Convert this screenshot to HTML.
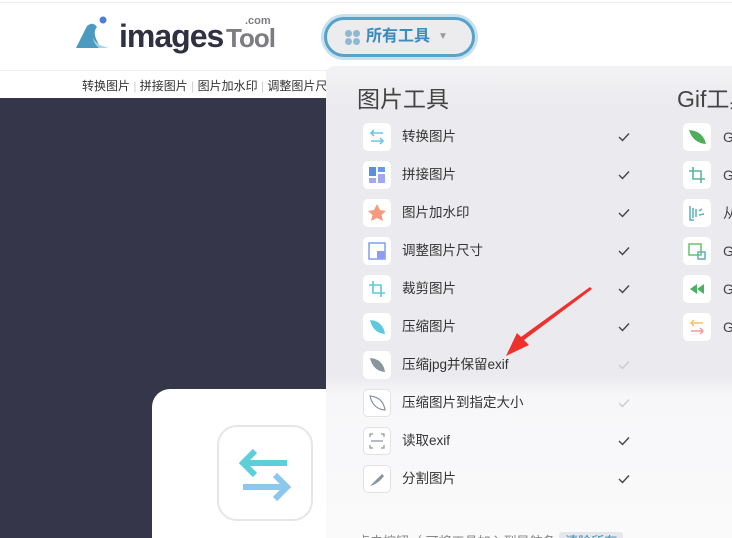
<!DOCTYPE html>
<html style="width:732px;height:538px;overflow:hidden"><head><meta charset="utf-8"><style>
*{margin:0;padding:0;box-sizing:border-box}
body{width:732px;height:538px;overflow:hidden;position:relative;background:#fff;font-family:"Liberation Sans","Noto Sans CJK SC",sans-serif;color:#333}
.abs{position:absolute}
.topline{top:0;left:0;width:732px;height:3px;border-bottom:1px solid #eee}
.nav{top:70px;left:0;width:732px;height:28px;border-top:1px solid #eee;font-size:12px;color:#333}
.dark{top:98px;left:0;width:732px;height:440px;background:#353649}
.card{left:152px;top:389px;width:300px;height:149px;background:#fff;border-radius:18px 18px 0 0}
.bigicon{left:217px;top:425px;width:96px;height:96px;border:2px solid #e6e6e6;border-radius:20px;background:#fff}
.panel{left:326px;top:66px;width:406px;height:472px;border-radius:8px 0 0 0;overflow:hidden;background:linear-gradient(#f3f3f6 0,#ebebef 40px,#ebebef 310px,#f7f7f9 330px,#fafafb 100%)}
.row{position:absolute;height:28px;font-size:13.5px;color:#333;line-height:28px}
.ib{position:absolute;width:28px;height:28px;background:#fff;border-radius:5px}
.ib.bd{border:1px solid #e2e2e2}
.ck{position:absolute;left:255px;top:9px}
.btn{left:324px;top:17px;width:151px;height:40px;border-radius:20px;border:3px solid #57a2c9;box-shadow:0 0 0 3px #c7e2ee;background:#ececef;color:#3c8bbb;font-size:16px;font-weight:bold;line-height:34px}
</style></head><body>
<div class="abs topline"></div>
<svg class="abs" style="left:75px;top:15px" width="40" height="35" viewBox="0 0 40 35"><circle cx="28" cy="5" r="3.5" fill="#4b7fd1"/><path d="M1 33 L12 11 Q18 6 22 12 Q16 18 26 33 Z" fill="#4b9ac0"/><path d="M18 22 Q20 30 34 33 L24 33 Q18 28 18 22Z" fill="#a8d3e4"/></svg>
<div class="abs" style="left:119px;top:16px;font-size:32px;font-weight:bold;color:#2f3042;letter-spacing:-1px;line-height:40px">images</div>
<div class="abs" style="left:226px;top:18px;font-size:26px;font-weight:bold;color:#7c7c82;line-height:40px;letter-spacing:-1px">Tool</div>
<div class="abs" style="left:245px;top:15px;font-size:11px;font-weight:bold;color:#7c7c82">.com</div>
<div class="abs btn"><span style="position:absolute;left:18px;top:10px;width:16px;height:16px">
<i style="position:absolute;left:0;top:0;width:7px;height:7px;border-radius:50%;background:#8fb9d0"></i><i style="position:absolute;left:8px;top:0;width:7px;height:7px;border-radius:50%;background:#8fb9d0"></i><i style="position:absolute;left:0;top:8px;width:7px;height:7px;border-radius:50%;background:#8fb9d0"></i><i style="position:absolute;left:8px;top:8px;width:7px;height:7px;border-radius:50%;background:#8fb9d0"></i></span><span style="position:absolute;left:39px;top:0">所有工具</span><span style="position:absolute;left:111px;top:0;font-size:10px;color:#999">▼</span></div>
<div class="abs nav"><span style="position:absolute;left:82px;top:6px;white-space:nowrap">转换图片 <span style="color:#ccc">|</span> 拼接图片 <span style="color:#ccc">|</span> 图片加水印 <span style="color:#ccc">|</span> 调整图片尺寸</span></div>
<div class="abs dark"></div>
<div class="abs card"></div>
<div class="abs bigicon"><svg width="92" height="92" viewBox="0 0 92 92"><path d="M26 36 H68" stroke="#5ecfd9" stroke-width="6"/><path d="M36 24 L24 36 L36 48" stroke="#5ecfd9" stroke-width="6" fill="none"/><path d="M24 60 H66" stroke="#8ec7ec" stroke-width="6"/><path d="M56 48 L68 60 L56 72" stroke="#8ec7ec" stroke-width="6" fill="none"/></svg></div>
<div class="abs panel">
<div class="abs" style="left:31px;top:18px;font-size:23px;color:#444;line-height:30px">图片工具</div>
<div class="abs" style="left:351px;top:18px;font-size:23px;color:#444;line-height:30px;white-space:nowrap">Gif工具</div>
<div class="row" style="left:37px;top:57px;width:300px"><div class="ib"><svg width="28" height="28"><path d="M8 10H20M11 7L8 10L11 13M8 18H20M17 15L20 18L17 21" stroke="#6cc6e0" stroke-width="1.6" fill="none"/></svg></div><span style="position:absolute;left:39px">转换图片</span><svg class="ck" width="12" height="10"><path d="M1 5L4.5 8.5L11 1.5" stroke="#444" stroke-width="1.4" fill="none"/></svg></div>
<div class="row" style="left:37px;top:95px;width:300px"><div class="ib"><svg width="28" height="28"><rect x="6" y="6" width="7" height="9" fill="#5a8fe0"/><rect x="15" y="6" width="7" height="5" fill="#6b9be6"/><rect x="15" y="13" width="7" height="9" fill="#9fa8f0"/><rect x="6" y="17" width="7" height="5" fill="#9fa8f0"/></svg></div><span style="position:absolute;left:39px">拼接图片</span><svg class="ck" width="12" height="10"><path d="M1 5L4.5 8.5L11 1.5" stroke="#444" stroke-width="1.4" fill="none"/></svg></div>
<div class="row" style="left:37px;top:133px;width:300px"><div class="ib"><svg width="28" height="28"><path d="M14 5L17 11L23 12L18.5 16L20 22L14 19L8 22L9.5 16L5 12L11 11Z" fill="#f59a80"/></svg></div><span style="position:absolute;left:39px">图片加水印</span><svg class="ck" width="12" height="10"><path d="M1 5L4.5 8.5L11 1.5" stroke="#444" stroke-width="1.4" fill="none"/></svg></div>
<div class="row" style="left:37px;top:171px;width:300px"><div class="ib"><svg width="28" height="28"><rect x="6" y="6" width="16" height="16" fill="none" stroke="#7fa0e6" stroke-width="1.5"/><rect x="14" y="14" width="8" height="8" fill="#8f9cf0"/></svg></div><span style="position:absolute;left:39px">调整图片尺寸</span><svg class="ck" width="12" height="10"><path d="M1 5L4.5 8.5L11 1.5" stroke="#444" stroke-width="1.4" fill="none"/></svg></div>
<div class="row" style="left:37px;top:209px;width:300px"><div class="ib"><svg width="28" height="28"><path d="M10 6V18H22M6 10H18V22" stroke="#5ec8dc" stroke-width="1.6" fill="none"/></svg></div><span style="position:absolute;left:39px">裁剪图片</span><svg class="ck" width="12" height="10"><path d="M1 5L4.5 8.5L11 1.5" stroke="#444" stroke-width="1.4" fill="none"/></svg></div>
<div class="row" style="left:37px;top:247px;width:300px"><div class="ib"><svg width="28" height="28"><path d="M7 7Q20 8 22 21Q10 20 7 7Z" fill="#5ec8dc"/></svg></div><span style="position:absolute;left:39px">压缩图片</span><svg class="ck" width="12" height="10"><path d="M1 5L4.5 8.5L11 1.5" stroke="#444" stroke-width="1.4" fill="none"/></svg></div>
<div class="row" style="left:37px;top:285px;width:300px"><div class="ib"><svg width="28" height="28"><path d="M7 7Q20 8 22 21Q10 20 7 7Z" fill="#8a959c"/></svg></div><span style="position:absolute;left:39px">压缩jpg并保留exif</span><svg class="ck" width="12" height="10"><path d="M1 5L4.5 8.5L11 1.5" stroke="#ccc" stroke-width="1.4" fill="none"/></svg></div>
<div class="row" style="left:37px;top:323px;width:300px"><div class="ib bd"><svg width="26" height="26"><path d="M6 6Q19 7 21 20Q9 19 6 6Z" fill="none" stroke="#8a959c" stroke-width="1.2"/></svg></div><span style="position:absolute;left:39px">压缩图片到指定大小</span><svg class="ck" width="12" height="10"><path d="M1 5L4.5 8.5L11 1.5" stroke="#ccc" stroke-width="1.4" fill="none"/></svg></div>
<div class="row" style="left:37px;top:361px;width:300px"><div class="ib bd"><svg width="26" height="26"><path d="M6 9V6H9M17 6H20V9M6 17V20H9M17 20H20V17M7 13H19" stroke="#8a959c" stroke-width="1.2" fill="none"/></svg></div><span style="position:absolute;left:39px">读取exif</span><svg class="ck" width="12" height="10"><path d="M1 5L4.5 8.5L11 1.5" stroke="#444" stroke-width="1.4" fill="none"/></svg></div>
<div class="row" style="left:37px;top:399px;width:300px"><div class="ib bd"><svg width="26" height="26"><path d="M6 20L18 8L20 10Q14 18 6 20Z" fill="#8a959c"/></svg></div><span style="position:absolute;left:39px">分割图片</span><svg class="ck" width="12" height="10"><path d="M1 5L4.5 8.5L11 1.5" stroke="#444" stroke-width="1.4" fill="none"/></svg></div>
<div class="ib" style="left:357px;top:57px"><svg width="28" height="28"><path d="M6 7Q20 8 23 21Q10 20 6 7Z" fill="#4fae5a"/></svg></div>
<div class="ib" style="left:357px;top:95px"><svg width="28" height="28"><path d="M10 6V18H22M6 10H18V22" stroke="#5bb59a" stroke-width="1.6" fill="none"/></svg></div>
<div class="ib" style="left:357px;top:133px"><svg width="28" height="28"><path d="M7 7V21H11M10 9V19M13 10V18M16 12L19 10M16 16L21 15" stroke="#5ab0b8" stroke-width="1.5" fill="none"/></svg></div>
<div class="ib" style="left:357px;top:171px"><svg width="28" height="28"><rect x="6" y="7" width="12" height="11" fill="none" stroke="#6bbf6a" stroke-width="1.5"/><rect x="15" y="15" width="7" height="7" fill="none" stroke="#5ab0b8" stroke-width="1.5"/></svg></div>
<div class="ib" style="left:357px;top:209px"><svg width="28" height="28"><path d="M14 9L7 14L14 19ZM21 9L14 14L21 19Z" fill="#4fae6a"/></svg></div>
<div class="ib" style="left:357px;top:247px"><svg width="28" height="28"><path d="M8 10H20M11 7L8 10L11 13" stroke="#f5c070" stroke-width="1.5" fill="none"/><path d="M8 18H20M17 15L20 18L17 21" stroke="#f59a9a" stroke-width="1.5" fill="none"/></svg></div>
<div class="abs" style="left:397px;top:57px;font-size:14px;line-height:28px;color:#444">G</div>
<div class="abs" style="left:397px;top:95px;font-size:14px;line-height:28px;color:#444">G</div>
<div class="abs" style="left:397px;top:133px;font-size:14px;line-height:28px;color:#444">从</div>
<div class="abs" style="left:397px;top:171px;font-size:14px;line-height:28px;color:#444">G</div>
<div class="abs" style="left:397px;top:209px;font-size:14px;line-height:28px;color:#444">G</div>
<div class="abs" style="left:397px;top:247px;font-size:14px;line-height:28px;color:#444">G</div>
<div class="abs" style="left:31px;top:465px;font-size:13px;color:#888;white-space:nowrap">点击按钮（ 可将工具加入到导航条 <span style="background:#e6e7ea;color:#3c8bbb;padding:2px 6px;border-radius:3px">清除所有</span></div>
</div>
<svg class="abs" style="left:0;top:0" width="732" height="538"><polygon points="592,289 524,340 529,345 506,356 517,333 521,337 590,287" fill="#f0302c"/></svg>
</body></html>
